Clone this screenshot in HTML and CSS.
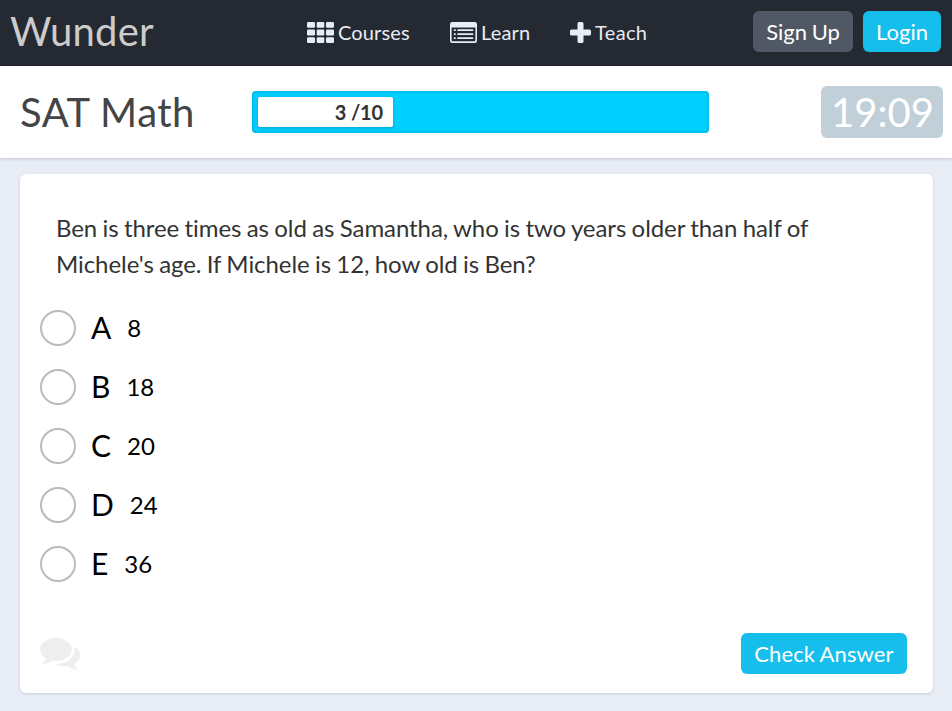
FILE: index.html
```html
<!DOCTYPE html>
<html lang="en">
<head>
<meta charset="utf-8">
<title>Wunder - SAT Math</title>
<link rel="stylesheet" href="styles.css">
</head>
<body>
<header class="navbar">
  <a class="brand">Wunder</a>
  <nav class="nav">
    <a class="nav-item courses"><svg width="27" height="21" viewBox="0 0 27 21"><g fill="currentColor"><rect width="8" height="5.7" rx="1.3"/><rect x="9.7" width="7.6" height="5.7" rx="1.3"/><rect x="19" width="8" height="5.7" rx="1.3"/><rect y="7.5" width="8" height="6" rx="1.3"/><rect x="9.7" y="7.5" width="7.6" height="6" rx="1.3"/><rect x="19" y="7.5" width="8" height="6" rx="1.3"/><rect y="15.2" width="8" height="5.8" rx="1.3"/><rect x="9.7" y="15.2" width="7.6" height="5.8" rx="1.3"/><rect x="19" y="15.2" width="8" height="5.8" rx="1.3"/></g></svg><span>Courses</span></a>
    <a class="nav-item learn"><svg width="27" height="21" viewBox="0 0 27 21"><path fill="currentColor" fill-rule="evenodd" d="M2.3 0H24.7Q27 0 27 2.3V18.7Q27 21 24.7 21H2.3Q0 21 0 18.7V2.3Q0 0 2.3 0ZM1.6 5.5V18.3Q1.6 19.3 2.6 19.3H24.4Q25.4 19.3 25.4 18.3V5.5Z"/><g fill="currentColor"><rect x="3.8" y="7.2" width="2" height="1.9" rx=".5"/><rect x="3.8" y="11.2" width="2" height="1.9" rx=".5"/><rect x="3.8" y="15.2" width="2" height="1.9" rx=".5"/><rect x="7.3" y="7.2" width="16" height="1.9" rx=".5"/><rect x="7.3" y="11.2" width="16" height="1.9" rx=".5"/><rect x="7.3" y="15.2" width="16" height="1.9" rx=".5"/></g></svg><span>Learn</span></a>
    <a class="nav-item teach"><svg width="21" height="21" viewBox="0 0 21 21"><path fill="currentColor" d="M9 0H12Q13.5 0 13.5 1.5V7.5H19.5Q21 7.5 21 9V12Q21 13.5 19.5 13.5H13.5V19.5Q13.5 21 12 21H9Q7.5 21 7.5 19.5V13.5H1.5Q0 13.5 0 12V9Q0 7.5 1.5 7.5H7.5V1.5Q7.5 0 9 0Z"/></svg><span>Teach</span></a>
  </nav>
  <div class="account">
    <button class="btn btn-dark">Sign Up</button>
    <button class="btn btn-primary login">Login</button>
  </div>
</header>
<section class="quiz-bar">
  <h1 class="quiz-title">SAT Math</h1>
  <div class="progress"><div class="progress-fill">3 /10</div></div>
  <div class="timer">19:09</div>
</section>
<main class="card">
  <p class="question">Ben is three times as old as Samantha, who is two years older than half of Michele's age. If Michele is 12, how old is Ben?</p>
  <ul class="options">
    <li class="option"><span class="radio"></span><span class="letter">A</span><span class="value">8</span></li>
    <li class="option"><span class="radio"></span><span class="letter">B</span><span class="value">18</span></li>
    <li class="option"><span class="radio"></span><span class="letter">C</span><span class="value">20</span></li>
    <li class="option"><span class="radio"></span><span class="letter">D</span><span class="value">24</span></li>
    <li class="option"><span class="radio"></span><span class="letter">E</span><span class="value">36</span></li>
  </ul>
  <footer class="card-footer">
    <svg class="comments" width="40" height="32" viewBox="0 0 40 32"><path fill="currentColor" d="M16 0C24.8 0 32 5 32 11.4S24.8 22.8 16 22.8C14.5 22.8 13.200 22.700 11.800 22.400C9.500 24.100 6.500 25.700 3.500 26C2.800 26.100 2.500 25.200 3.100 24.700C4.500 23.500 5.500 22.500 6 20.400C2.300 18.300 0 15 0 11.400C0 5 7.200 0 16 0Z"/><path fill="currentColor" d="M34.200 8.500C37.700 10.500 40 13.700 40 17.300C40 21 37.700 24.200 34 26.200C34.500 28.200 35.500 29.200 36.900 30.400C37.500 31 37.200 31.700 36.500 31.600C33.500 31.300 30.500 29.900 28.200 28.200C26.800 28.500 25.500 28.600 24 28.600C20.200 28.600 16.800 27.700 14.100 26.100C15 26.200 15.500 26.200 16 26.200C20.900 26.200 25.600 24.800 29 22.300C32.700 19.600 34.800 15.700 34.800 11.800C34.800 10.700 34.600 9.600 34.200 8.500Z"/></svg>
    <button class="btn btn-primary check">Check Answer</button>
  </footer>
</main>
</body>
</html>
```
FILE: styles.css
```css
* { box-sizing: border-box; }
body {
  margin: 0;
  height: 711px;
  overflow: hidden;
  background: #e7ecf5;
  color: #333;
  font-family: Lato, "Liberation Sans", sans-serif;
}
.navbar {
  display: flex;
  align-items: flex-start;
  height: 66px;
  padding: 0 11px 0 10px;
  background: #252a32;
}
.brand { width: 297px; font-size: 40px; line-height: 62px; letter-spacing: .2px; color: #ccc; }
.nav { display: flex; height: 66px; align-items: center; color: #e7ecf5; font-size: 20px; letter-spacing: .15px; }
.nav-item { display: flex; align-items: center; gap: 4px; line-height: 24px; white-space: nowrap; }
.nav-item svg { margin-bottom: 1px; }
.nav-item span { margin-bottom: 2px; }
.courses { width: 143px; }
.learn { width: 120px; }
.teach { letter-spacing: .35px; }
.account { display: flex; gap: 10px; margin: 11px 0 0 auto; }
.btn {
  height: 41px;
  padding: 0;
  border: 0;
  border-radius: 6px;
  color: #fff;
  font: 22px/41px Lato, "Liberation Sans", sans-serif;
  text-align: center;
  white-space: nowrap;
}
.btn-dark { width: 100px; background: #4f5864; word-spacing: -1px; }
.btn-primary { background: #15beeb; }
.login { width: 78px; }
.check { width: 166px; letter-spacing: .12px; word-spacing: -.6px; }
.quiz-bar {
  display: flex;
  align-items: center;
  height: 92px;
  padding: 0 9px 0 20px;
  background: #fff;
  box-shadow: 0 1px 3px rgba(0, 0, 0, .17);
}
.quiz-title { width: 232px; margin: 0; font-size: 40px; font-weight: 400; line-height: 52px; letter-spacing: .5px; color: #444; }
.progress {
  width: 457px;
  height: 42px;
  padding: 6px;
  border-radius: 4px;
  background: #00cfff;
  box-shadow: inset 0 0 3px rgba(0, 80, 120, .45);
}
.progress-fill {
  width: 135px;
  height: 30px;
  padding-right: 10px;
  border-radius: 2px;
  background: #fff;
  box-shadow: 0 1px 3px rgba(0, 60, 90, .3);
  font-size: 20px;
  font-weight: 700;
  line-height: 30px;
  letter-spacing: -.15px;
  text-align: right;
}
.timer {
  width: 122px;
  height: 52px;
  margin-left: auto;
  padding-left: 1px;
  border-radius: 6px;
  background: #c1cfd9;
  color: #fff;
  font-size: 40px;
  line-height: 52px;
  text-align: center;
}
.card {
  display: flex;
  flex-direction: column;
  width: 913px;
  height: 519px;
  margin: 16px 0 0 20px;
  padding: 36px 26px 19px 20px;
  border-radius: 6px;
  background: #fff;
  box-shadow: 0 1px 3px rgba(0, 0, 0, .13);
}
.question { width: 790px; margin: 0 0 0 16px; font-size: 24px; line-height: 36px; letter-spacing: -.07px; word-spacing: -.7px; }
.options { display: flex; flex-direction: column; gap: 23px; margin: 28px 0 0; padding: 0; list-style: none; color: #000; }
.option { display: flex; align-items: center; height: 36px; }
.radio { width: 36px; height: 36px; border: 2px solid #bbb; border-radius: 50%; }
.letter { margin: 0 16px 2px 15px; font-size: 30px; line-height: 36px; }
.value { font-size: 24px; line-height: 36px; }
.card-footer { display: flex; align-items: flex-start; justify-content: space-between; margin-top: auto; }
.comments { margin-top: 5px; color: #eee; }
```
